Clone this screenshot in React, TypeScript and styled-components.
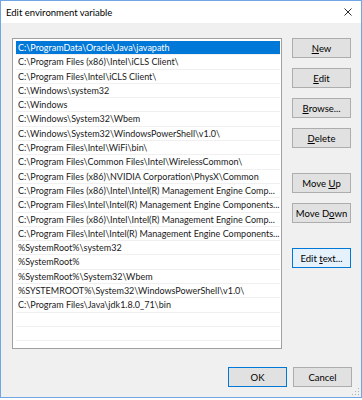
import React from 'react';
import styled, { createGlobalStyle } from 'styled-components';

const GlobalStyle = createGlobalStyle`
  html, body {
    margin: 0;
    padding: 0;
    background: #ffffff;
  }
  body {
    font-family: Lato, 'Noto Sans', sans-serif;
  }
`;

const Window = styled.div`
  position: relative;
  width: 362px;
  height: 398px;
  box-sizing: border-box;
  border: 1px solid #70a5e6;
  display: flex;
  flex-direction: column;
  background: #f0f0f0;
`;

const TitleBar = styled.div`
  height: 22px;
  flex: none;
  background: #ffffff;
  display: flex;
  align-items: center;
  justify-content: space-between;
  padding: 0 9px 0 5px;
  font-size: 9.5px;
  color: #000;
`;

const Body = styled.div`
  flex: 1;
  display: flex;
  flex-direction: column;
  padding: 15px 9px 10px 11px;
`;

const Main = styled.div`
  display: flex;
  gap: 10px;
`;

const List = styled.div`
  width: 270px;
  height: 311px;
  box-sizing: border-box;
  border: 1px solid #a0a0a0;
  background: #ffffff;
  padding: 2px 1px 0 3px;
  overflow: hidden;
`;

const Row = styled.div<{ $selected?: boolean }>`
  height: 14.3px;
  box-sizing: border-box;
  border-bottom: 1px solid #f0f0f0;
  padding-left: 2px;
  font-size: 9px;
  line-height: 13.3px;
  white-space: nowrap;
  overflow: hidden;
  color: ${(p) => (p.$selected ? '#ffffff' : '#1a1a1a')};
  background: ${(p) => (p.$selected ? '#0078d7' : 'transparent')};
`;

const Buttons = styled.div`
  display: flex;
  flex-direction: column;
  gap: 10px;
`;

const Button = styled.button<{ $default?: boolean; $hot?: boolean; $space?: number }>`
  width: 59px;
  height: 20px;
  margin-top: ${(p) => p.$space || 0}px;
  box-sizing: border-box;
  padding: 0;
  font-family: inherit;
  font-size: 9.5px;
  white-space: nowrap;
  color: #000;
  border: 1px solid ${(p) => (p.$default || p.$hot ? '#0078d7' : '#adadad')};
  background: ${(p) => (p.$hot ? '#e5f1fb' : '#e1e1e1')};
  display: flex;
  align-items: center;
  justify-content: center;
`;

const Footer = styled.div`
  margin-top: auto;
  display: flex;
  justify-content: flex-end;
  gap: 6px;
`;

const Grip = styled.svg`
  position: absolute;
  right: 1px;
  bottom: 1px;
`;

const U = styled.span`
  text-decoration: underline;
  text-underline-offset: 1px;
`;

const PATHS = [
  'C:\\ProgramData\\Oracle\\Java\\javapath',
  'C:\\Program Files (x86)\\Intel\\iCLS Client\\',
  'C:\\Program Files\\Intel\\iCLS Client\\',
  'C:\\Windows\\system32',
  'C:\\Windows',
  'C:\\Windows\\System32\\Wbem',
  'C:\\Windows\\System32\\WindowsPowerShell\\v1.0\\',
  'C:\\Program Files\\Intel\\WiFi\\bin\\',
  'C:\\Program Files\\Common Files\\Intel\\WirelessCommon\\',
  'C:\\Program Files (x86)\\NVIDIA Corporation\\PhysX\\Common',
  'C:\\Program Files (x86)\\Intel\\Intel(R) Management Engine Comp...',
  'C:\\Program Files\\Intel\\Intel(R) Management Engine Components...',
  'C:\\Program Files (x86)\\Intel\\Intel(R) Management Engine Comp...',
  'C:\\Program Files\\Intel\\Intel(R) Management Engine Components...',
  '%SystemRoot%\\system32',
  '%SystemRoot%',
  '%SystemRoot%\\System32\\Wbem',
  '%SYSTEMROOT%\\System32\\WindowsPowerShell\\v1.0\\',
  'C:\\Program Files\\Java\\jdk1.8.0_71\\bin',
  '',
  '',
  '',
];

const App = () => (
  <>
    <GlobalStyle />
    <Window>
      <TitleBar>
        <span>Edit environment variable</span>
        <svg width="8" height="8" viewBox="0 0 8 8">
          <path d="M0.5 0.5 L7.5 7.5 M7.5 0.5 L0.5 7.5" stroke="#111" strokeWidth="0.9" />
        </svg>
      </TitleBar>
      <Body>
        <Main>
          <List>
            {PATHS.map((p, i) => (
              <Row key={i} $selected={i === 0}>
                {p}
              </Row>
            ))}
          </List>
          <Buttons>
            <Button>
              <U>N</U>ew
            </Button>
            <Button>
              <U>E</U>dit
            </Button>
            <Button>
              <U>B</U>rowse...
            </Button>
            <Button>
              <U>D</U>elete
            </Button>
            <Button $space={15}>
              Move&nbsp;<U>U</U>p
            </Button>
            <Button>
              Move&nbsp;D<U>o</U>wn
            </Button>
            <Button $space={15} $hot>
              Edit&nbsp;<U>t</U>ext...
            </Button>
          </Buttons>
        </Main>
        <Footer>
          <Button $default>OK</Button>
          <Button>Cancel</Button>
        </Footer>
      </Body>
      <Grip width="8" height="8" viewBox="0 0 8 8">
        <rect x="6" y="0" width="1" height="1" fill="#b0b0b0" />
        <rect x="3" y="3" width="1" height="1" fill="#b0b0b0" />
        <rect x="6" y="3" width="1" height="1" fill="#b0b0b0" />
        <rect x="0" y="6" width="1" height="1" fill="#b0b0b0" />
        <rect x="3" y="6" width="1" height="1" fill="#b0b0b0" />
        <rect x="6" y="6" width="1" height="1" fill="#b0b0b0" />
      </Grip>
    </Window>
  </>
);

export default App;
